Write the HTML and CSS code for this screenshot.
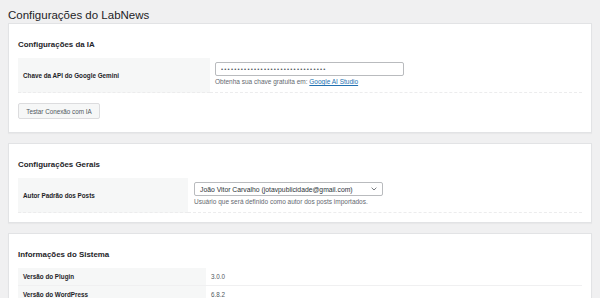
FILE: index.html
```html
<!DOCTYPE html>
<html lang="pt-BR">
<head>
    <meta charset="UTF-8">
    <title>Configurações do LabNews</title>
    <link rel="stylesheet" href="styles.css">
</head>
<body>
  <div class="wrap">
    <h1 class="page-title">Configurações do LabNews</h1>

    <!-- configuracoes da IA -->
    <div class="card">
      <h2>Configurações da IA</h2>
      <table class="form-table">
        <tr>
          <th class="label-ia">Chave da API do Google Gemini</th>
          <td>
            <input class="field" type="password" value="AIzaSyD4kL9xQ2mN7vB3cT8wR1pZ5hJ6">
            <p class="desc">Obtenha sua chave gratuita em: <a href="#">Google AI Studio</a></p>
          </td>
        </tr>
      </table>
      <button class="btn" type="button">Testar Conexão com IA</button>
    </div>

    <!-- configuracoes gerais -->
    <div class="card">
      <h2>Configurações Gerais</h2>
      <table class="form-table">
        <tr>
          <th class="label-geral">Autor Padrão dos Posts</th>
          <td class="td-select">
            <div class="select">
              <span>João Vitor Carvalho (jotavpublicidade@gmail.com)</span>
              <svg width="6" height="4" viewBox="0 0 6 4"><path d="M0.6 0.7 L3 3 L5.4 0.7" fill="none" stroke="#50575e" stroke-width="0.8"/></svg>
            </div>
            <p class="desc">Usuário que será definido como autor dos posts importados.</p>
          </td>
        </tr>
      </table>
    </div>

    <!-- infos systeme -->
    <div class="card">
      <h2>Informações do Sistema</h2>
      <table class="info-table">
        <tr>
          <th>Versão do Plugin</th>
          <td>3.0.0</td>
        </tr>
        <tr>
          <th>Versão do WordPress</th>
          <td>6.8.2</td>
        </tr>
      </table>
    </div>
  </div>
</body>
</html>
```

FILE: styles.css
```css
body{
  margin: 0;
  background: #f0f0f1;
  font-family: "Liberation Sans", Arial, sans-serif;
  color: #1d2327;
}
.wrap{
  padding: 0 8px;
}
.page-title{
  font-size: 11.5px;
  font-weight: 400;
  line-height: 14px;
  margin: 0;
  padding: 8px 0 1px;
}
.card{
  background: #fff;
  border: 1px solid #e2e3e5;
  box-shadow: 0 1px 1px rgba(0,0,0,0.03);
  padding: 15px 9px 9px;
  margin-bottom: 10px;
}
.card h2{
  font-size: 7.9px;
  font-weight: 600;
  line-height: 12px;
  margin: 0 0 7px;
}
table{
  width: 100%;
  border-collapse: collapse;
}
th{
  background: #f6f7f7;
  text-align: left;
  font-size: 6.3px;
  font-weight: 700;
  color: #1d2327;
  padding: 0 5px;
  vertical-align: middle;
}
.form-table tr{
  border-bottom: 1px dashed #ececed;
}
.form-table td{
  padding: 4px 5px 6px;
  height: 24px;
}
.label-ia{
  width: 182px;
}
.label-geral{
  width: 160px;
}
.td-select{
  padding-top: 5px;
}
.form-table .td-select{
  padding-left: 6px;
}
.field{
  display: block;
  box-sizing: border-box;
  width: 189px;
  height: 14px;
  border: 1px solid #b9bbbe;
  border-radius: 2px;
  padding: 0 5px;
  font-size: 6px;
  letter-spacing: 1.2px;
  color: #50575e;
  margin: 0;
}
.select{
  box-sizing: border-box;
  width: 189px;
  height: 14px;
  border: 1px solid #b9bbbe;
  border-radius: 2px;
  padding: 0 5px;
  display: flex;
  align-items: center;
  justify-content: space-between;
  font-size: 6.8px;
  color: #2c3338;
}
.desc{
  margin: 1px 0 0;
  font-size: 6.5px;
  line-height: 9px;
  color: #646970;
}
.desc a{
  color: #2271b1;
}
.btn{
  display: block;
  margin: 10px 0 4px;
  width: 82px;
  height: 16px;
  padding: 0;
  background: #f6f7f7;
  border: 1px solid #dcdcde;
  border-radius: 2px;
  font-family: inherit;
  font-size: 6.3px;
  color: #50575e;
}
.info-table tr{
  border-bottom: 1px solid #f0f0f1;
}
.info-table th{
  width: 178px;
  height: 17px;
  font-weight: 600;
}
.info-table td{
  font-size: 6.3px;
  color: #50575e;
  padding: 0 5px;
}
```
